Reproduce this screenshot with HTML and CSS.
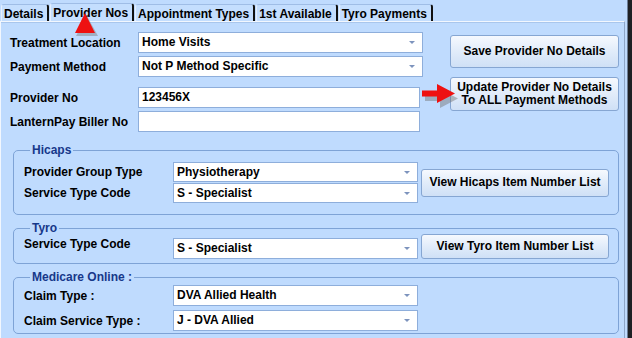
FILE: index.html
```html
<!DOCTYPE html>
<html lang="en">
<head>
    <meta charset="UTF-8">
    <title>Provider Nos</title>
<link rel="stylesheet" href="styles.css">
</head>
<body>
    <div class="window">
        <!-- Tab strip -->
        <div class="tabs">
            <div class="tab">Details</div>
            <div class="tab active">Provider Nos</div>
            <div class="tab">Appointment Types</div>
            <div class="tab">1st Available</div>
            <div class="tab">Tyro Payments</div>
        </div>

        <div class="panel">
            <div class="top">
                <div class="fields">
                    <div class="row">
                        <span class="label">Treatment Location</span>
                        <div class="select wide">Home Visits</div>
                    </div>
                    <div class="row row-tight">
                        <span class="label">Payment Method</span>
                        <div class="select wide">Not P Method Specific</div>
                    </div>
                    <div class="row row-gap">
                        <span class="label">Provider No</span>
                        <div class="input">123456X</div>
                    </div>
                    <div class="row row-close">
                        <span class="label">LanternPay Biller No</span>
                        <div class="input"></div>
                    </div>
                </div>
                <div class="actions">
                    <button class="btn btn-save">Save Provider No Details</button>
                    <button class="btn btn-update">Update Provider No Details<br>To ALL Payment Methods</button>
                </div>
            </div>

            <!-- Hicaps -->
            <fieldset class="group group-hicaps">
                <legend>Hicaps</legend>
                <div class="group-body">
                    <div class="group-fields">
                        <div class="grow">
                            <span class="glabel">Provider Group Type</span>
                            <div class="select">Physiotherapy</div>
                        </div>
                        <div class="grow grow-1">
                            <span class="glabel">Service Type Code</span>
                            <div class="select">S - Specialist</div>
                        </div>
                    </div>
                    <button class="btn btn-list btn-hicaps">View Hicaps Item Number List</button>
                </div>
            </fieldset>

            <!-- Tyro -->
            <fieldset class="group group-tyro">
                <legend>Tyro</legend>
                <div class="group-body">
                    <div class="group-fields">
                        <div class="grow grow-tyro">
                            <span class="glabel">Service Type Code</span>
                            <div class="select">S - Specialist</div>
                        </div>
                    </div>
                    <button class="btn btn-list btn-tyro">View Tyro Item Number List</button>
                </div>
            </fieldset>

            <!-- Medicare Online -->
            <fieldset class="group group-medicare">
                <legend>Medicare Online :</legend>
                <div class="group-fields">
                    <div class="grow">
                        <span class="glabel">Claim Type :</span>
                        <div class="select">DVA Allied Health</div>
                    </div>
                    <div class="grow grow-4">
                        <span class="glabel">Claim Service Type :</span>
                        <div class="select">J - DVA Allied</div>
                    </div>
                </div>
            </fieldset>
        </div>

        <!-- Annotations -->
        <svg class="mark-tab" width="24" height="24" viewBox="0 0 24 24">
            <polygon points="12,1 23,21 1,21" fill="#7a7a7a" opacity="0.45" transform="translate(1,2)"/>
            <polygon points="11,0 21,20 1,20" fill="#ee1111"/>
        </svg>
        <svg class="mark-arrow" width="40" height="26" viewBox="0 0 40 26">
            <polygon points="2,9 17,9 17,2 35,11.5 17,21 17,14 2,14" fill="#707070" opacity="0.45" transform="translate(2,3)"/>
            <polygon points="1,6.5 16,6.5 16,0 34,9.5 16,19 16,12.5 1,12.5" fill="#ee1111"/>
        </svg>
    </div>
</body>
</html>
```

FILE: styles.css
```css
body {
    margin: 0;
    width: 632px;
    height: 338px;
    overflow: hidden;
    background-color: #1e2024;
    font-family: "Liberation Sans", Arial, sans-serif;
    font-size: 12px;
    font-weight: bold;
    color: #000;
}

.window {
    position: relative;
    width: 628px;
    height: 338px;
    background-color: #bfdbfe;
    border-right: 1px solid #6d7f99;
    box-sizing: border-box;
}

/* Tab strip */
.tabs {
    display: flex;
    align-items: flex-end;
    height: 21px;
    padding-left: 1px;
}

.tab {
    height: 16px;
    line-height: 18px;
    padding: 0 4px 0 2px;
    margin-right: 1px;
    background-color: #c4defe;
    border-top: 1px solid #9fbde6;
    border-left: 1px solid #e6f0fd;
    border-right: 2px solid #111;
    border-radius: 3px 3px 0 0;
    white-space: nowrap;
    overflow: hidden;
}

.tab.active {
    height: 17px;
    line-height: 19px;
}

/* Main panel */
.panel {
    height: 317px;
    border-top: 1px solid #f2f7fe;
    border-left: 1px solid #f2f7fe;
    border-right: 1px solid #8ea6c8;
    margin-right: 2px;
    box-sizing: border-box;
    box-shadow: inset 0 1px 0 #a9c6ec;
}

.top {
    display: flex;
    padding: 10px 0 0 8px;
}

.fields {
    width: 414px;
}

.row {
    display: flex;
    align-items: center;
}

.row-tight { margin-top: 3px; }
.row-gap { margin-top: 10px; }
.row-close { margin-top: 3px; }

.label {
    width: 128px;
    flex: none;
    padding-left: 1px;
}

.select, .input {
    position: relative;
    height: 21px;
    line-height: 19px;
    padding-left: 3px;
    background-color: #fff;
    border: 1px solid #8eaedb;
    box-sizing: border-box;
    white-space: nowrap;
}

.select::after {
    content: "";
    position: absolute;
    right: 7px;
    top: 8px;
    border-left: 3px solid transparent;
    border-right: 3px solid transparent;
    border-top: 3px solid #7d93bd;
}

.select {
    width: 245px;
    height: 20px;
    line-height: 18px;
}

.select.wide {
    width: 286px;
    height: 21px;
    line-height: 19px;
}

.input {
    width: 282px;
}

.actions {
    display: flex;
    flex-direction: column;
    margin-left: 27px;
    padding-top: 3px;
}

.btn {
    font-family: inherit;
    font-size: 12px;
    font-weight: bold;
    color: #000;
    background: linear-gradient(#f6f9fe, #e3edfa 45%, #cfe0f6);
    border: 1px solid #86a6d2;
    border-radius: 3px;
    padding: 0;
    line-height: 13px;
}

.btn-save {
    width: 169px;
    height: 33px;
}

.btn-update {
    width: 169px;
    height: 34px;
    margin-top: 9px;
}

/* Group boxes */
.group {
    margin: 0 0 0 12px;
    width: 606px;
    padding: 0 0 0 10px;
    border: 1px solid #7ea3d6;
    border-radius: 5px;
    box-sizing: border-box;
}

.group legend {
    padding: 0 2px;
    margin-left: 6px;
    line-height: 12px;
    color: #17388a;
}

.group-hicaps {
    margin-top: 12px;
    padding-top: 6px;
    padding-bottom: 11px;
}

.group-tyro {
    margin-top: 7px;
    padding-top: 0;
    padding-bottom: 4px;
}

.group-medicare {
    margin-top: 7px;
    padding-top: 2px;
    padding-bottom: 2px;
}

.group-body {
    display: flex;
    align-items: center;
}

.grow {
    display: flex;
    align-items: center;
}

.grow-1 { margin-top: 1px; }
.grow-4 { margin-top: 4px; }

.grow-tyro {
    align-items: flex-start;
    padding-top: 3px;
}

.grow-tyro .select {
    height: 21px;
    margin-top: 1px;
}

.group-medicare .select {
    height: 21px;
    line-height: 19px;
}

.glabel {
    width: 149px;
    flex: none;
}

.btn-list {
    width: 188px;
    margin-left: 3px;
}

.btn-hicaps { height: 28px; }
.btn-tyro { height: 25px; }

/* Red annotation marks */
.mark-tab {
    position: absolute;
    left: 74px;
    top: 13px;
}

.mark-arrow {
    position: absolute;
    left: 421px;
    top: 84px;
}
```
